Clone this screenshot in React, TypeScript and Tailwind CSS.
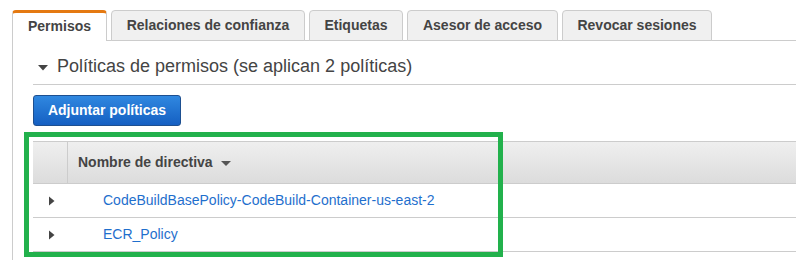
import React from "react";

const tabs = ["Relaciones de confianza", "Etiquetas", "Asesor de acceso", "Revocar sesiones"];
const tabWidths = ["w-[194px]", "w-[94px]", "w-[151px]", "w-[150px]"];

function RightCaret() {
  return (
    <svg width="7" height="10" viewBox="0 0 7 10">
      <path d="M1 0.5 L6.5 5 L1 9.5 Z" fill="#444" />
    </svg>
  );
}

export default function App() {
  return (
    <div
      className="w-[796px] h-[260px] bg-white overflow-hidden text-[#444]"
      style={{ fontFamily: '"Liberation Sans", Arial, sans-serif' }}
    >
      <div className="pt-[10px] pl-[12px] flex">
        {/* Tabs */}
        <div className="flex items-end gap-[4px] h-[31px] w-full border-b border-[#ccc] relative">
          <div className="w-[95px] h-[31px] -mb-px bg-white border-x border-[#ccc] border-t-[3px] border-t-[#e47911] rounded-t-[4px] flex items-center justify-center text-[14px] font-bold text-[#444] pb-[2px]">
            Permisos
          </div>
          {tabs.map((t, i) => (
            <div
              key={t}
              className={`${tabWidths[i]} h-[31px] -mb-px bg-[#f0f0f0] border border-[#ccc] rounded-t-[4px] flex items-center justify-center text-[14px] font-bold text-[#444]`}
            >
              {t}
            </div>
          ))}
        </div>
      </div>
      <div className="ml-[12px] border-l border-[#ccc] h-[220px] pl-[20px]">
        {/* Heading */}
        <div className="h-[44px] border-b border-[#ccc] flex items-center pt-[8px]">
          <svg width="10" height="6" viewBox="0 0 10 6" className="ml-[5px] mr-[9px] mt-[2px]">
            <path d="M0 0 L10 0 L5 5.5 Z" fill="#444" />
          </svg>
          <span className="text-[18px] text-[#444]">Políticas de permisos (se aplican 2 políticas)</span>
        </div>
        {/* Button */}
        <div className="pt-[10px]">
          <button className="w-[148px] h-[31px] rounded-[3px] border border-[#1d4f90] bg-gradient-to-b from-[#3088e0] to-[#155fc2] text-white text-[14px] font-bold flex items-center justify-center pb-[1px]">
            Adjuntar políticas
          </button>
        </div>
        {/* Table */}
        <div className="relative mt-[15px]">
          <div className="border-t border-[#ccc]">
            <div className="h-[42px] flex bg-gradient-to-b from-[#efefef] to-[#dcdcdc] border-b border-[#ccc]">
              <div className="w-[35px] border-r border-[#ccc]" />
              <div className="flex items-center pl-[10px] text-[14px] font-bold text-[#444]">
                Nombre de directiva
                <svg width="10" height="6" viewBox="0 0 10 6" className="ml-[8px] mt-[2px]">
                  <path d="M0 0 L10 0 L5 5 Z" fill="#555" />
                </svg>
              </div>
            </div>
            {["CodeBuildBasePolicy-CodeBuild-Container-us-east-2", "ECR_Policy"].map((r) => (
              <div key={r} className="h-[34px] flex items-center border-b border-[#ccc]">
                <div className="w-[35px] flex justify-center pl-[1px]">
                  <RightCaret />
                </div>
                <span className="pl-[35px] text-[14px] text-[#1f6fcd]">{r}</span>
              </div>
            ))}
          </div>
          <div className="absolute left-[-9px] top-[-9px] w-[479px] h-[125px] border-[5px] border-[#22b14c] pointer-events-none" />
        </div>
      </div>
    </div>
  );
}
